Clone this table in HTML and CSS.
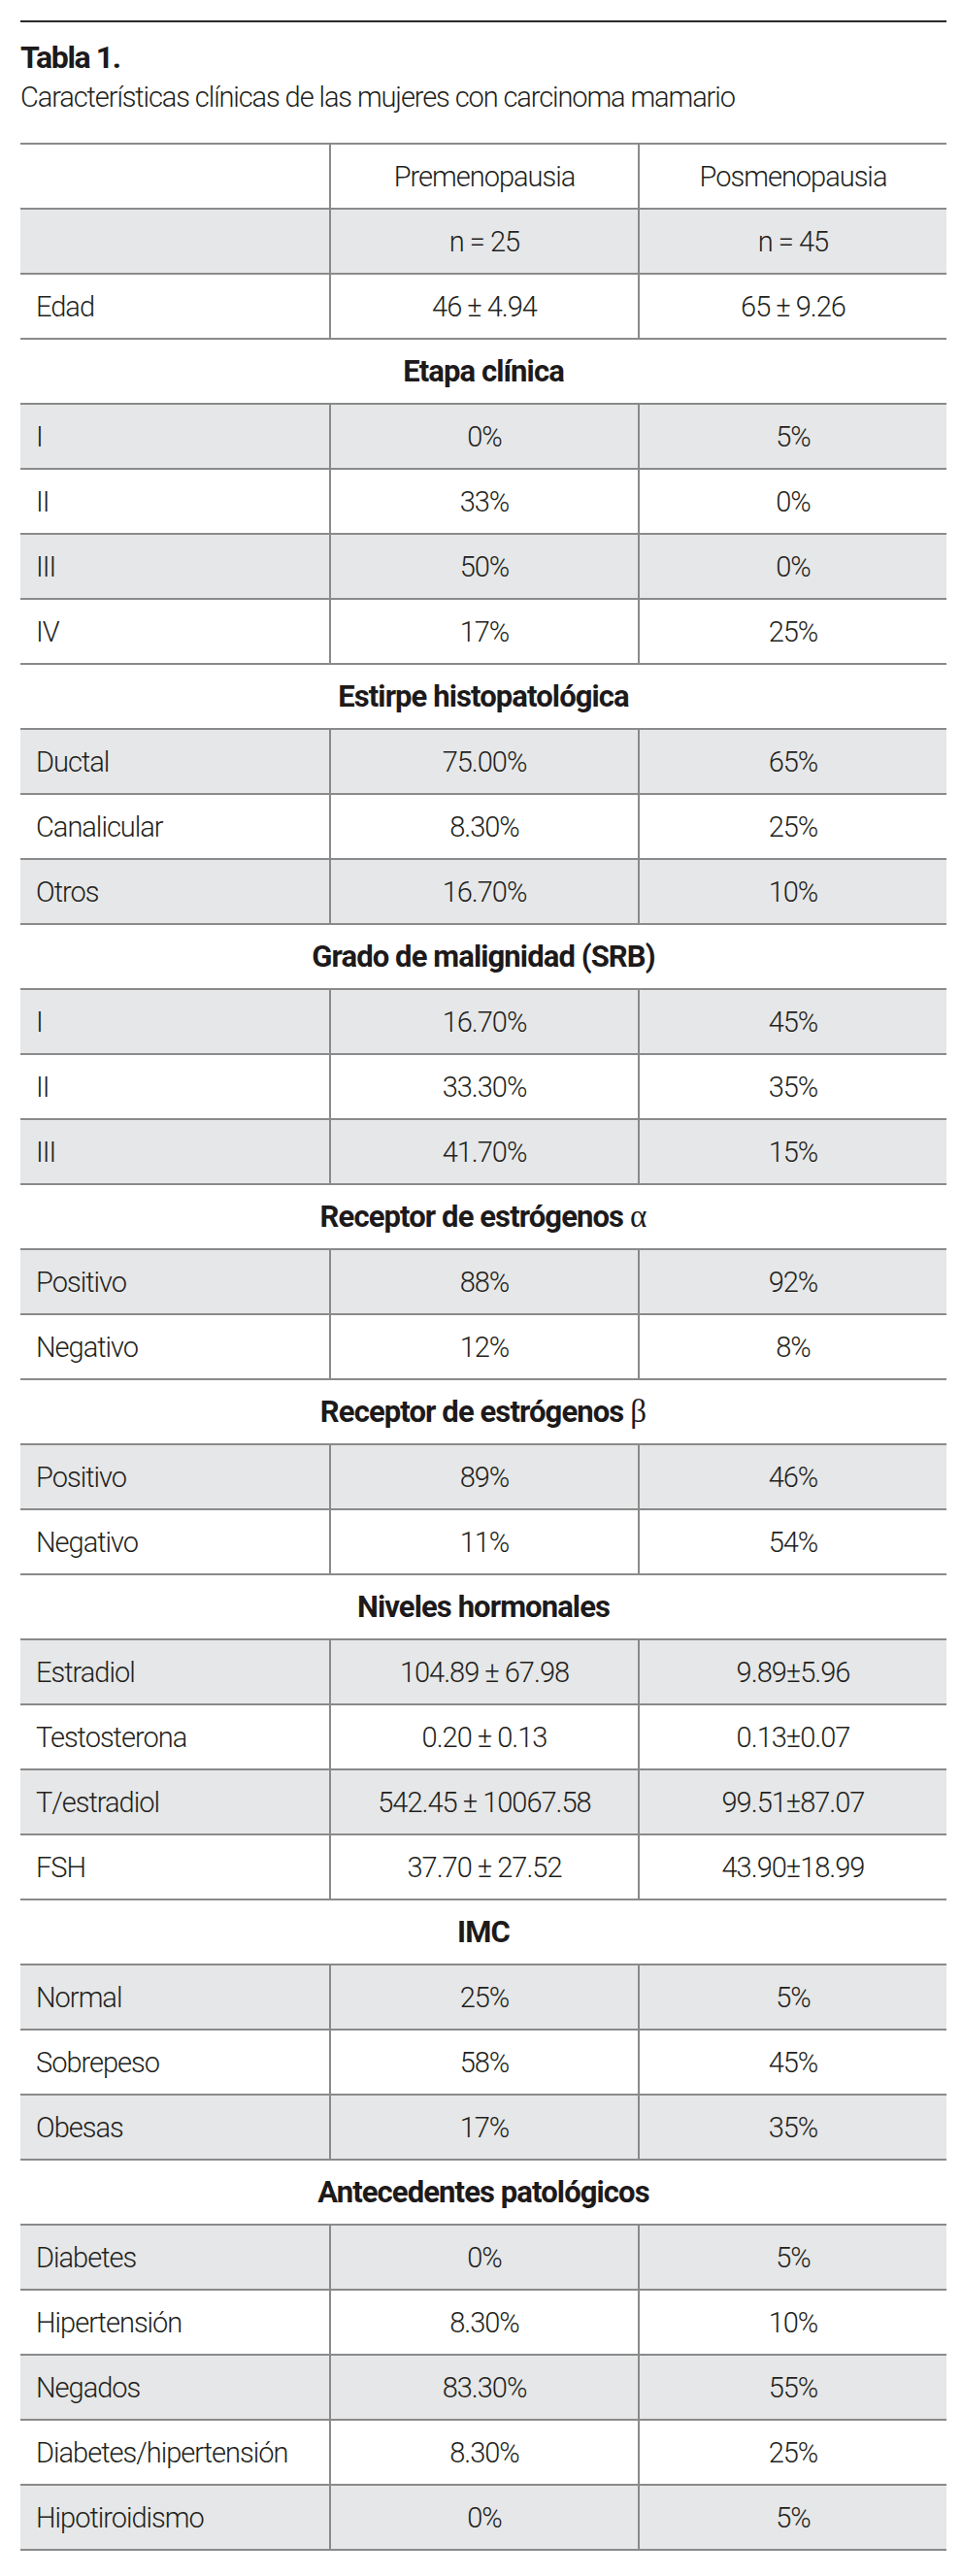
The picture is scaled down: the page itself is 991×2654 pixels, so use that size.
FILE: index.html
```html
<!DOCTYPE html>
<html lang="es">
<head>
<meta charset="utf-8">
<title>Tabla 1</title>
<link rel="stylesheet" href="styles.css">
</head>
<body>
<div class="page">
  <hr class="rule">
  <div class="caption">
    <div class="caption-title">Tabla 1.</div>
    <div class="caption-sub">Características clínicas de las mujeres con carcinoma mamario</div>
  </div>
  <div class="table">
    <div class="row"><div class="cell label"></div><div class="cell">Premenopausia</div><div class="cell">Posmenopausia</div></div>
    <div class="row shade"><div class="cell label"></div><div class="cell">n = 25</div><div class="cell">n = 45</div></div>
    <div class="row"><div class="cell label">Edad</div><div class="cell">46 ± 4.94</div><div class="cell">65 ± 9.26</div></div>

    <div class="row section"><div class="cell">Etapa clínica</div></div>
    <div class="row shade"><div class="cell label">I</div><div class="cell">0%</div><div class="cell">5%</div></div>
    <div class="row"><div class="cell label">II</div><div class="cell">33%</div><div class="cell">0%</div></div>
    <div class="row shade"><div class="cell label">III</div><div class="cell">50%</div><div class="cell">0%</div></div>
    <div class="row"><div class="cell label">IV</div><div class="cell">17%</div><div class="cell">25%</div></div>

    <div class="row section"><div class="cell">Estirpe histopatológica</div></div>
    <div class="row shade"><div class="cell label">Ductal</div><div class="cell">75.00%</div><div class="cell">65%</div></div>
    <div class="row"><div class="cell label">Canalicular</div><div class="cell">8.30%</div><div class="cell">25%</div></div>
    <div class="row shade"><div class="cell label">Otros</div><div class="cell">16.70%</div><div class="cell">10%</div></div>

    <div class="row section"><div class="cell">Grado de malignidad (SRB)</div></div>
    <div class="row shade"><div class="cell label">I</div><div class="cell">16.70%</div><div class="cell">45%</div></div>
    <div class="row"><div class="cell label">II</div><div class="cell">33.30%</div><div class="cell">35%</div></div>
    <div class="row shade"><div class="cell label">III</div><div class="cell">41.70%</div><div class="cell">15%</div></div>

    <div class="row section"><div class="cell">Receptor de estrógenos <span class="greek">α</span></div></div>
    <div class="row shade"><div class="cell label">Positivo</div><div class="cell">88%</div><div class="cell">92%</div></div>
    <div class="row"><div class="cell label">Negativo</div><div class="cell">12%</div><div class="cell">8%</div></div>

    <div class="row section"><div class="cell">Receptor de estrógenos <span class="greek">β</span></div></div>
    <div class="row shade"><div class="cell label">Positivo</div><div class="cell">89%</div><div class="cell">46%</div></div>
    <div class="row"><div class="cell label">Negativo</div><div class="cell">11%</div><div class="cell">54%</div></div>

    <div class="row section"><div class="cell">Niveles hormonales</div></div>
    <div class="row shade"><div class="cell label">Estradiol</div><div class="cell">104.89 ± 67.98</div><div class="cell">9.89±5.96</div></div>
    <div class="row"><div class="cell label">Testosterona</div><div class="cell">0.20 ± 0.13</div><div class="cell">0.13±0.07</div></div>
    <div class="row shade"><div class="cell label">T/estradiol</div><div class="cell">542.45 ± 10067.58</div><div class="cell">99.51±87.07</div></div>
    <div class="row"><div class="cell label">FSH</div><div class="cell">37.70 ± 27.52</div><div class="cell">43.90±18.99</div></div>

    <div class="row section"><div class="cell">IMC</div></div>
    <div class="row shade"><div class="cell label">Normal</div><div class="cell">25%</div><div class="cell">5%</div></div>
    <div class="row"><div class="cell label">Sobrepeso</div><div class="cell">58%</div><div class="cell">45%</div></div>
    <div class="row shade"><div class="cell label">Obesas</div><div class="cell">17%</div><div class="cell">35%</div></div>

    <div class="row section"><div class="cell">Antecedentes patológicos</div></div>
    <div class="row shade"><div class="cell label">Diabetes</div><div class="cell">0%</div><div class="cell">5%</div></div>
    <div class="row"><div class="cell label">Hipertensión</div><div class="cell">8.30%</div><div class="cell">10%</div></div>
    <div class="row shade"><div class="cell label">Negados</div><div class="cell">83.30%</div><div class="cell">55%</div></div>
    <div class="row"><div class="cell label">Diabetes/hipertensión</div><div class="cell">8.30%</div><div class="cell">25%</div></div>
    <div class="row shade last"><div class="cell label">Hipotiroidismo</div><div class="cell">0%</div><div class="cell">5%</div></div>
  </div>
</div>
</body>
</html>
```

FILE: styles.css
```css
html, body {
  margin: 0;
  padding: 0;
  background: #ffffff;
}

body {
  font-family: Roboto, "Liberation Sans", sans-serif;
  color: #231f20;
}

.page {
  width: 954px;
  padding: 21px 0 24px 21px;
}

.rule {
  margin: 0;
  border: 0;
  height: 2px;
  background: #2a2a2a;
}

.caption {
  margin-top: 16px;
  margin-bottom: 26px;
}

.caption-title {
  font-size: 32px;
  line-height: 41px;
  font-weight: 700;
  letter-spacing: -1.4px;
  color: #1d1a1b;
}

.caption-sub {
  font-size: 29px;
  line-height: 41px;
  font-weight: 300;
  letter-spacing: -1.1px;
}

.table {
  display: flex;
  flex-direction: column;
}

.row {
  display: grid;
  grid-template-columns: 318px 318px 318px;
  height: 67px;
  box-sizing: border-box;
  border-top: 2px solid #8a8a8a;
}

.row.last {
  height: 69px;
  border-bottom: 2px solid #8a8a8a;
}

.row.shade {
  background: #e6e7e8;
}

.cell {
  display: flex;
  align-items: center;
  justify-content: center;
  box-sizing: border-box;
  font-size: 29px;
  font-weight: 300;
  letter-spacing: -1px;
  white-space: nowrap;
}

.cell + .cell {
  border-left: 2px solid #8a8a8a;
}

.cell.label {
  justify-content: flex-start;
  padding-left: 16px;
}

.row.section {
  grid-template-columns: 1fr;
}

.row.section .cell {
  font-weight: 700;
  font-size: 31px;
  letter-spacing: -0.9px;
  color: #1d1a1b;
}

.greek {
  font-family: "Liberation Serif", serif;
  font-weight: normal;
  font-size: 33px;
  letter-spacing: 0;
  margin-left: 7px;
}
```
